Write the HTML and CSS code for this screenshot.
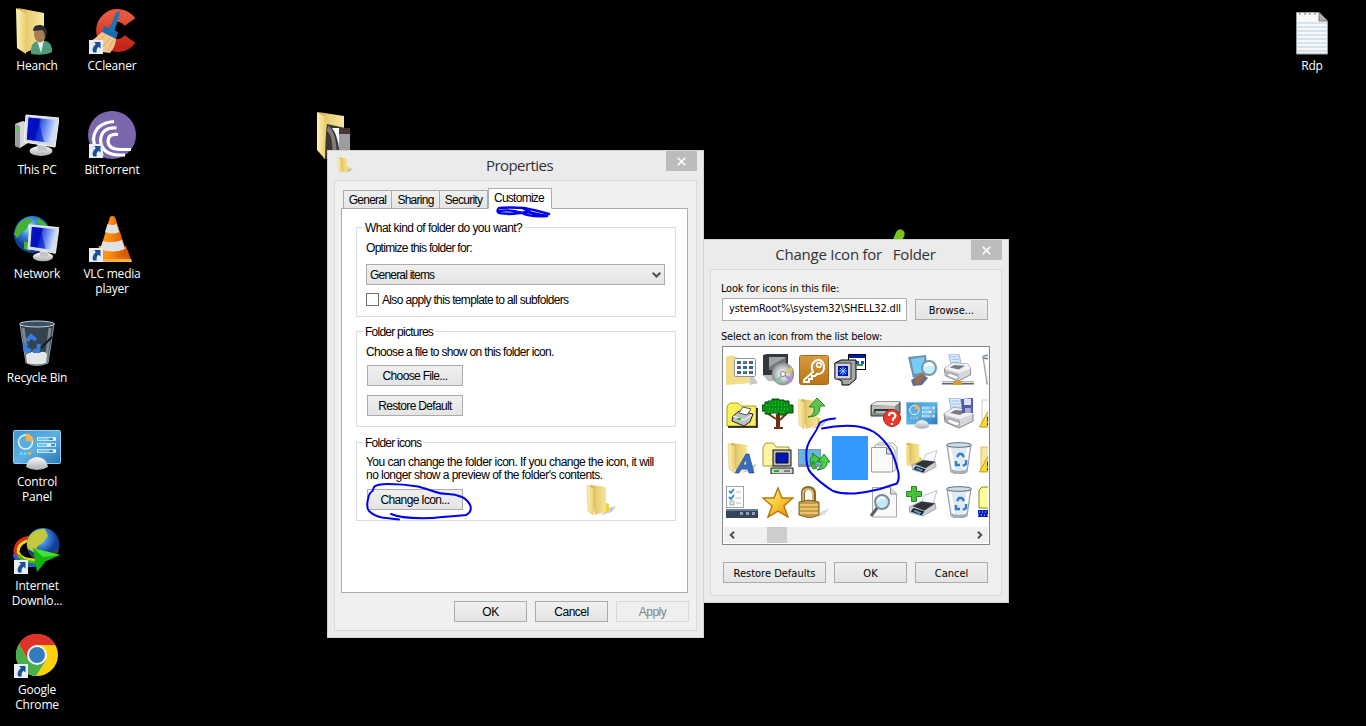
FILE: index.html
```html
<!DOCTYPE html>
<html lang="en">
	<head>
		<meta charset="UTF-8">
		<meta name="viewport" content="width=device-width,initial-scale=1">
		<title>Change folder icon</title>
		<link rel="stylesheet" href="styles.css">
	</head>
	<body>
		<!-- shared icons -->
		<svg class="sprite" width="0" height="0">
			<defs>
				<linearGradient id="g-folder" x1="0" x2="1"><stop offset="0" stop-color="#fff3b4"/><stop offset="1" stop-color="#eacb6c"/></linearGradient>
				<linearGradient id="g-back" x1="0" x2="1"><stop offset="0" stop-color="#c9a23e"/><stop offset=".35" stop-color="#e9cd72"/><stop offset="1" stop-color="#f9e9a0"/></linearGradient>
				<linearGradient id="g-screen" x1="0" x2="1" y2=".25"><stop offset="0" stop-color="#0a1fd0"/><stop offset=".42" stop-color="#0009b0"/><stop offset=".5" stop-color="#3358e8"/><stop offset="1" stop-color="#cfe0ff"/></linearGradient>
				<linearGradient id="g-metal" y1="0" x2="0" y2="1"><stop offset="0" stop-color="#fafafa"/><stop offset="1" stop-color="#a9adb1"/></linearGradient>
				<linearGradient id="g-panel" x2="1" y2="1"><stop offset="0" stop-color="#3f96d2"/><stop offset=".5" stop-color="#5eb0e2"/><stop offset="1" stop-color="#2c78b8"/></linearGradient>
				<linearGradient id="g-key" y1="0" x2="0" y2="1"><stop offset="0" stop-color="#d99b3c"/><stop offset="1" stop-color="#b8731a"/></linearGradient>
				<linearGradient id="g-gold" x1="0" x2="1" y2="1"><stop offset="0" stop-color="#fff3a0"/><stop offset=".5" stop-color="#fcc937"/><stop offset="1" stop-color="#d8860c"/></linearGradient>
				<linearGradient id="g-cone" x1="0" x2="1"><stop offset="0" stop-color="#ff9a20"/><stop offset=".4" stop-color="#ff8a10"/><stop offset="1" stop-color="#c95200"/></linearGradient>
				<linearGradient id="g-red" y1="0" x2="0" y2="1"><stop offset="0" stop-color="#e8583f"/><stop offset="1" stop-color="#c4261b"/></linearGradient>
				<radialGradient id="g-globe" cx=".4" cy=".3"><stop offset="0" stop-color="#b5e6ff"/><stop offset=".5" stop-color="#3b87dc"/><stop offset="1" stop-color="#123c96"/></radialGradient>
				<radialGradient id="g-disc"><stop offset="0" stop-color="#fff"/><stop offset=".6" stop-color="#c4c6ca"/><stop offset="1" stop-color="#8b8e92"/></radialGradient>
			</defs>
			<symbol id="arrow" viewBox="0 0 14 14">
				<rect width="14" height="14" fill="#e9eef4"/>
				<path d="M5 2H11.500V8.500L9.500 6.700C7.800 8.200 7.200 9.800 7.800 12.500H4.200C2.800 9.500 4 6.400 6.900 4Z" fill="#1d4f94"/>
			</symbol>
			<symbol id="folder" viewBox="0 0 32 32">
				<path d="M23 24L31 22 27 28 16 31Z" fill="#000" opacity=".2"/>
				<path d="M5 1L21 3V20L23 21V27L10 31Z" fill="url(#g-back)"/>
				<path d="M21 19l3 1v7l-3 1.500Z" fill="#ead13f"/>
				<path d="M2 1L8 4C9 5 9.500 8 9 22L8 31 3 27Z" fill="url(#g-folder)" stroke="#d9bc60" stroke-width=".5"/>
			</symbol>
			<symbol id="printer" viewBox="0 0 32 32">
				<path d="M7 0H18L21 12 10 15Z" fill="#dcebfa" stroke="#7391c4" stroke-width=".7"/>
				<path d="M9 3h8M10 6h8M10 9h9" stroke="#9fbde8"/>
				<path d="M2 16L11 10 28 11 31 16V23L17 30 3 24Z" fill="#d5d7dc" stroke="#63666d" stroke-width=".8"/>
				<path d="M2 16L11 10 28 11 31 16 18 21Z" fill="#f2f2f5"/>
				<path d="M3 18L18 22V29L3 24Z" fill="#b3b5bd"/>
				<path d="M7 21L18 25 15 28 5 24Z" fill="#fff" stroke="#777" stroke-width=".5"/>
				<path d="M8 15L13 12 25 13 18 17Z" fill="#777b84"/>
			</symbol>
			<symbol id="printer-dark" viewBox="0 0 32 32">
				<path d="M18 8L32 3 28 17 14 20Z" fill="#f8fbff" stroke="#9da4ac" stroke-width=".7"/>
				<path d="M1 21L14 15 30 17 31 23 16 31 2 27Z" fill="#c9ccd0" stroke="#757a80" stroke-width=".6"/>
				<path d="M5 20L15 15 30 17 18 25Z" fill="#303439"/>
				<path d="M3 26L6 22 18 26 15 30Z" fill="#17191c"/>
				<path d="M5 25l3-1 7 3-2 2Z" fill="#44a2d8"/>
			</symbol>
			<symbol id="bin" viewBox="0 0 32 32">
				<path d="M5 3L9 30Q17 34 25 30L29 3Z" fill="#dde5ed" fill-opacity=".85" stroke="#8c98a5"/>
				<path d="M8 6L12 29M26 6L22 30" stroke="#fff" stroke-width="2.500"/>
				<ellipse cx="17" cy="3" rx="12.500" ry="2.300" fill="#d3dde6" stroke="#5c6d7e"/>
				<path d="M9 27Q17 31 25 27L24 31Q17 33 10 31Z" fill="#a5afb8"/>
				<path d="M15 15l2-3h3l2 3M24 18l0 4-3 2M18 23h-4l0-4" fill="none" stroke="#2e7ed3" stroke-width="2.400"/>
			</symbol>
			<symbol id="panel" viewBox="0 0 48 48">
				<rect x=".5" y="6.500" width="47" height="33" rx="1" fill="url(#g-panel)" stroke="#8fd0f2"/>
				<circle cx="12.500" cy="18" r="7" fill="#5aaee2" stroke="#e3f5ff" stroke-width="1.500"/>
				<path d="M13 17V9.500A8 8 0 0 1 21 17Z" fill="#f8b050"/>
				<path d="M24 15h19M24 21h19M24 27h19" stroke="#e6f8ff" stroke-width="3.500"/>
				<path d="M25 15h11M25 21h9M25 27h11" stroke="#4fb5ec" stroke-width="1.500"/>
				<path d="M36 15h4M38 21h4M36 27h4" stroke="#1c66b4" stroke-width="1.500"/>
				<circle cx="8" cy="29.500" r="1.500" fill="#59e3ff"/><circle cx="12" cy="29.500" r="1.500" fill="#59e3ff"/><circle cx="16.500" cy="29.500" r="1.600" fill="#ffb444"/>
				<path d="M13 43Q14 34 24 33 34 34 35 43 30 46 24 46 18 46 13 43Z" fill="url(#g-metal)"/>
			</symbol>
			<symbol id="monitor" viewBox="0 0 36 44">
				<ellipse cx="18" cy="37" rx="11.500" ry="5" fill="url(#g-metal)"/>
				<path d="M14 28l9 1 1 8h-9Z" fill="#c3c6c9"/>
				<path d="M3 1L36 4 32 33 1 28Z" fill="#d9dcdf" stroke="#f6f6f6"/>
				<path d="M5.500 3.500L33 6 29.500 29.500 3.800 25.500Z" fill="url(#g-screen)"/>
				<path d="M15 4.500L21 28 4 25.500 5.500 3.500Z" fill="#0013c4" opacity=".6"/>
			</symbol>
			<symbol id="dialog-folder" viewBox="0 0 32 32">
				<path d="M1 28V8L4 5H12L15 8H30V28Z" fill="#f7f05c" stroke="#a8a800"/>
				<path d="M2 29H31V10" fill="none" stroke="#000" stroke-width="1.500"/>
			</symbol>
			<symbol id="warning" viewBox="0 0 32 32">
				<path d="M16 2L31 30H1Z" fill="#fbd82b" stroke="#b58b00" stroke-width="1.500"/>
				<path d="M15 11h4l-1 10h-2ZM15 23h4v4h-4Z" fill="#111"/>
			</symbol>
		</svg>

		<main class="desktop">
			<div class="shortcut">
				<svg class="shortcut__icon" viewBox="0 0 48 48">
					<path d="M5 0L31 5V36L12 45Z" fill="url(#g-back)"/>
					<path d="M3 0L12 5C14 7 14 10 13 34V46L4 40Z" fill="url(#g-folder)"/>
					<path d="M18 46Q17 34 25 33H33Q40 36 39 44 32 48 18 46Z" fill="#4f9c78"/>
					<path d="M24 32l4 13 3-13Z" fill="#e9f5f5"/>
					<ellipse cx="27" cy="26" rx="6" ry="8.500" fill="#a77c52"/>
					<path d="M20 23Q20 16 28 17 34 18 34 25L32 31Q32 23 29 22Z" fill="#292a2d"/>
				</svg>
				<span class="shortcut__name">Heanch</span>
			</div>
			<div class="shortcut">
				<svg class="shortcut__icon" viewBox="0 0 48 48">
					<path d="M2 12L10 9 15 11V31L7 36 2 34Z" fill="#d5d8da"/>
					<path d="M2 12L7 14V36L2 34Z" fill="#9a9ea1"/>
					<path d="M3 16l3 1v2l-3-1Z" fill="#3cea22"/>
					<use href="#monitor" x="10" y="2" width="36" height="44"/>
				</svg>
				<span class="shortcut__name">This PC</span>
			</div>
			<div class="shortcut">
				<svg class="shortcut__icon" viewBox="0 0 48 48">
					<circle cx="19.500" cy="18.500" r="18.500" fill="url(#g-globe)"/>
					<path d="M5 8L14 2 20 4 15 9 14 13 9 16 4 22 1 18ZM24 2Q32 5 35 11L29 10 24 7ZM11 25l7 3-1 7-6-2Z" fill="#45b233"/>
					<use href="#monitor" x="14" y="8" width="32" height="39"/>
				</svg>
				<span class="shortcut__name">Network</span>
			</div>
			<div class="shortcut">
				<svg class="shortcut__icon" viewBox="0 0 48 48">
					<path d="M7 4L13 43Q24 48 35 43L41 4Z" fill="#35434f" stroke="#8a98a4"/>
					<path d="M10 8L15 42M37 8L33 43" stroke="#909da9" stroke-width="3" opacity=".75"/>
					<path d="M13 35Q20 29 26 33 31 30 34 34L33 43Q24 46 14 43Z" fill="#e4e6e7"/>
					<path d="M14 21l4-5 5 4M13 23l-1 6 6 2M20 31h5l1-7" fill="none" stroke="#347ce0" stroke-width="4"/>
					<path d="M39 17L28 28" stroke="#121b23" stroke-width="2"/>
					<ellipse cx="24" cy="4" rx="17.500" ry="3" fill="#385166" stroke="#cbd3d9"/>
				</svg>
				<span class="shortcut__name">Recycle Bin</span>
			</div>
			<div class="shortcut">
				<svg class="shortcut__icon" viewBox="0 0 48 48"><use href="#panel"/></svg>
				<span class="shortcut__name">Control Panel</span>
			</div>
			<div class="shortcut">
				<svg class="shortcut__icon" viewBox="0 0 48 48">
					<g fill="none" stroke-width="3">
						<path d="M18 9Q2 11 2 24 4 34 16 36" stroke="#e02a18"/>
						<path d="M18 12Q5 14 5 24 8 32 22 32" stroke="#f7d11a"/>
						<path d="M5 27Q12 36 24 34" stroke="#30bc22"/>
						<path d="M1 26Q5 40 25 37" stroke="#2f59df"/>
					</g>
					<circle cx="30" cy="16.500" r="16.500" fill="url(#g-globe)"/>
					<path d="M17 7Q23 0 32 1L35 8 30 14 24 19 22 25 15 21Q12 14 17 7Z" fill="#c3c83d"/>
					<path d="M16 25Q28 30 46 21 43 33 30 33 21 32 16 25Z" fill="#3b4a31"/>
					<path d="M20 20L47 27 33 33 24 44Z" fill="#12b513"/>
					<path d="M20 20L47 27 30 29Z" fill="#47e238"/>
					<use href="#arrow" x="1" y="32" width="14" height="14"/>
				</svg>
				<span class="shortcut__name">Internet Downlo...</span>
			</div>
			<div class="shortcut">
				<svg class="shortcut__icon" viewBox="0 0 48 48">
					<circle cx="24" cy="23" r="21" fill="#ffd00c"/>
					<path d="M6 12A21 21 0 0 1 42.500 13H24L15 28Z" fill="#df3229"/>
					<path d="M6 12A21 21 0 0 0 23 44L33 28H15Z" fill="#4aae4b"/>
					<circle cx="24" cy="23" r="10" fill="#f4f6f7"/>
					<circle cx="24" cy="23" r="8" fill="#327cbd"/>
					<use href="#arrow" x="1" y="32" width="14" height="14"/>
				</svg>
				<span class="shortcut__name">Google Chrome</span>
			</div>
			<div class="shortcut">
				<svg class="shortcut__icon" viewBox="0 0 48 48">
					<path d="M42 14A15 15 0 1 0 42 31" fill="none" stroke="url(#g-red)" stroke-width="13"/>
					<path d="M15 23Q7 31 1 34L6 43 22 45Q28 38 28 30Z" fill="#f2c68c"/>
					<path d="M6 37l11-10M13 41l9-11M20 43l5-11" stroke="#dca76a" stroke-width="1"/>
					<path d="M16 18L30 24 28 31 14 24Z" fill="#1d69ad"/>
					<path d="M28 5Q30 2 32 5L26 25 21 22Z" fill="#1c73b8"/>
					<use href="#arrow" x="1" y="32" width="14" height="14"/>
				</svg>
				<span class="shortcut__name">CCleaner</span>
			</div>
			<div class="shortcut">
				<svg class="shortcut__icon" viewBox="0 0 48 48">
					<circle cx="24" cy="23" r="24" fill="#7b67ad"/>
					<g fill="none" stroke="#fff" stroke-width="3.200">
						<path d="M30 22.500Q20 21 20 30 21 37.500 32 37.500H43"/>
						<path d="M28.500 16Q13 15 12.500 29 14 42 30 43H37"/>
						<path d="M26 9.500Q7 11 5.500 27 6 38 15 44"/>
					</g>
					<use href="#arrow" x="1" y="32" width="14" height="14"/>
				</svg>
				<span class="shortcut__name">BitTorrent</span>
			</div>
			<div class="shortcut">
				<svg class="shortcut__icon" viewBox="0 0 48 48">
					<path d="M11 30H38L44 46H6Z" fill="url(#g-cone)"/>
					<path d="M22 1Q24-1 27 1L39 37Q33 43 24 42 16 42 11 38Z" fill="url(#g-cone)"/>
					<path d="M6 43H43L44 46H6Z" fill="#ffb13b"/>
					<path d="M19.500 8Q24 10 28.500 8L31 16Q25 19 17 16ZM15 25Q24 28 34 24L37 33Q25 38 12 33Z" fill="#dfe2e4"/>
					<use href="#arrow" x="1" y="32" width="14" height="14"/>
				</svg>
				<span class="shortcut__name">VLC media player</span>
			</div>
			<div class="shortcut shortcut--folder">
				<svg class="shortcut__icon" viewBox="0 0 48 48">
					<path d="M5 0L31 4V40L12 47Z" fill="url(#g-back)"/>
					<path d="M14 12L37 17V47H10Z" fill="#3a3836"/>
					<path d="M15 14Q23 18 24 44L19 46Q21 25 14 19Z" fill="#827e74"/>
					<path d="M19 16h7v20Q24 22 19 16Z" fill="#fff"/>
					<path d="M26 17L37 18V47H26Z" fill="#9c9ca2"/>
					<path d="M26 16h11v6H26Z" fill="#4b3531"/>
					<path d="M4 0L12 5 13 12 12 47 4 38Z" fill="url(#g-folder)"/>
				</svg>
			</div>
			<div class="shortcut shortcut--rdp">
				<svg class="shortcut__icon" viewBox="0 0 48 48">
					<path d="M8.500 4.500H31L39.500 13V46H8.500Z" fill="#f6f8fa" stroke="#9c9fa2"/>
					<path d="M9 15h30M9 19h30M9 23h30M9 27h30M9 31h30M9 35h30M9 39h30M9 43h30" stroke="#b6cfe0"/>
					<path d="M31 4L40 13H31Z" fill="#aeb2b6" stroke="#4e5154" stroke-width=".7"/>
					<path d="M12 5v3M17 5v3M22 5v3M27 5v3" stroke="#6c6c6c" stroke-dasharray="2 1"/>
				</svg>
				<span class="shortcut__name">Rdp</span>
			</div>
		</main>

		<div class="leaf"></div>

		<section class="window window--properties">
			<header class="titlebar">
				<svg class="titlebar__icon" viewBox="0 0 32 32"><use href="#folder"/></svg>
				<h1 class="titlebar__text">Properties</h1>
				<span class="close"><svg width="9" height="9" viewBox="0 0 9 9"><path d="M.7.7l7.600 7.600M8.300.7L.7 8.300" stroke="#fff" stroke-width="1.600"/></svg></span>
			</header>
			<div class="client">
				<nav class="tabs">
					<span class="tab">General</span>
					<span class="tab">Sharing</span>
					<span class="tab">Security</span>
					<span class="tab tab--active">Customize</span>
				</nav>
				<div class="panel">
					<fieldset class="group group--kind">
						<legend>What kind of folder do you want?</legend>
						<p class="line line--optimize">Optimize this folder for:</p>
						<div class="select"><span>General items</span><svg width="9" height="6" viewBox="0 0 9 6"><path d="M.7.7L4.500 4.500 8.300.7" fill="none" stroke="#505050" stroke-width="2"/></svg></div>
						<div class="check"><span class="check__box"></span><span>Also apply this template to all subfolders</span></div>
					</fieldset>
					<fieldset class="group group--pictures">
						<legend class="tight">Folder pictures</legend>
						<p class="line">Choose a file to show on this folder icon.</p>
						<span class="button button--wide">Choose File...</span>
						<span class="button button--wide">Restore Default</span>
					</fieldset>
					<fieldset class="group group--icons">
						<legend class="tight">Folder icons</legend>
						<p class="note">You can change the folder icon. If you change the icon, it will<br>no longer show a preview of the folder's contents.</p>
						<div class="preview">
							<span class="button button--wide">Change Icon...</span>
							<svg class="preview__icon" viewBox="0 0 32 32"><use href="#folder"/></svg>
						</div>
					</fieldset>
				</div>
				<footer class="buttons">
					<span class="button">OK</span>
					<span class="button">Cancel</span>
					<span class="button button--disabled">Apply</span>
				</footer>
			</div>
		</section>

		<section class="window window--change">
			<header class="titlebar">
				<h1 class="titlebar__text">Change Icon for   Folder</h1>
				<span class="close"><svg width="9" height="9" viewBox="0 0 9 9"><path d="M.7.7l7.600 7.600M8.300.7L.7 8.300" stroke="#fff" stroke-width="1.600"/></svg></span>
			</header>
			<div class="client">
				<p class="label">Look for icons in this file:</p>
				<div class="file">
					<span class="input">ystemRoot%\system32\SHELL32.dll</span>
					<span class="button">Browse...</span>
				</div>
				<p class="label label--list">Select an icon from the list below:</p>
				<div class="list">
					<div class="icons">
						<!-- row 1 -->
						<svg class="icon" viewBox="0 0 32 32">
							<path d="M0 3Q6 0 9 2l3 2h14v25L0 31Z" fill="#f3dc8b"/><path d="M24 18l8 11-8 2Z" fill="#c4c9ce"/>
							<rect x="8.500" y="4.500" width="21" height="18" rx="1" fill="#fbfcff" stroke="#8e939a"/>
							<path d="M11 8.500h4M17 8.500h4M23 8.500h4M11 13.500h4M17 13.500h4M23 13.500h4M11 18.500h4M17 18.500h4M23 18.500h4" stroke="#3a668f" stroke-width="3"/>
							<path d="M23 8h3M11 13h3M23 18h3" stroke="#af4836" stroke-width="2"/>
							<path d="M17 8h3M17 18h3" stroke="#3f9c62" stroke-width="2"/>
						</svg>
						<svg class="icon" viewBox="0 0 32 32">
							<path d="M1 1L5 0H26V21H1Z" fill="#35383b"/><path d="M1 21h25l5 7-25-1Z" fill="#babdc0"/><path d="M7 3h17v13H7Z" fill="#73777b"/><path d="M7 3h17L7 13Z" fill="#a1a4a7"/>
							<circle cx="21" cy="20" r="11" fill="url(#g-disc)" stroke="#8c8e90" stroke-width=".7"/>
							<path d="M21 20L29 13 31 17Z" fill="#e4c75b"/><path d="M21 20L13 27 17 30Z" fill="#8bc0a9"/><path d="M21 20L28 28 31 24Z" fill="#b58dd0"/><circle cx="21" cy="20" r="2.500" fill="#fff" stroke="#777"/>
						</svg>
						<svg class="icon" viewBox="0 0 32 32">
							<rect x="1.500" y="1.500" width="29" height="29" rx="2" fill="url(#g-key)" stroke="#a66b1c"/>
							<path d="M15 18L6 26v2h5v-3h3v-3h3l2-2Q27 20 26 11 24 4 17 7 12 11 15 18Z" fill="none" stroke="#fff" stroke-width="2"/><circle cx="21" cy="11" r="2.300" fill="none" stroke="#fff" stroke-width="1.600"/>
						</svg>
						<svg class="icon" viewBox="0 0 32 32">
							<rect x="14.500" y=".5" width="17" height="15" fill="#fff" stroke="#000"/><path d="M15 1h16v3H15Z" fill="#001bac"/><path d="M22 7h3v3h-3ZM27 7h3v3h-3Z" fill="#1e51e4"/><path d="M23 11h6" stroke="#219d32" stroke-width="2"/>
							<path d="M1 9L7 6H22V25L15 31H8V27L1 24Z" fill="#a7a7a7" stroke="#000"/><path d="M1 9H17V25H1Z" fill="#d2d2d2" stroke="#333"/><path d="M4 12h10v10H4Z" fill="#001bbd"/><path d="M9 13v8M5 17h8M6 14l6 6M12 14l-6 6" stroke="#8ad8ff"/>
						</svg>
						<span class="icon"></span>
						<svg class="icon" viewBox="0 0 32 32">
							<path d="M2 3L20 1 22 21 7 24Z" fill="#728fae"/><path d="M5 5L18 3 19 18 8 20Z" fill="#76cef5"/><path d="M5 26l11-6 6 4-6 7-9 1Z" fill="#646c8a"/><path d="M17 20l-7 9" stroke="#ad6b3a" stroke-width="4"/>
							<circle cx="23" cy="14" r="7" fill="#c5eeff" stroke="#7695a8" stroke-width="2"/><path d="M19 12q4-5 8 0" fill="none" stroke="#fff" stroke-width="3"/>
						</svg>
						<svg class="icon" viewBox="0 0 32 32"><use href="#printer" width="30" height="29"/><path d="M0 29h32" stroke="#5e6265" stroke-width="3"/><path d="M0 28.500h32" stroke="#e0e2e3"/><path d="M11 27h9v4h-9Z" fill="#d79b22"/></svg>
						<svg class="icon" viewBox="0 0 32 32"><use href="#bin"/></svg>
						<!-- row 2 -->
						<svg class="icon" viewBox="0 0 32 32"><use href="#dialog-folder"/><path d="M7 18l6-5 14 3-3 8-6 4-12-5Z" fill="#c1c1c1" stroke="#222"/><path d="M13 15l4-6 8 2-4 6Z" fill="#fff" stroke="#555"/><path d="M7 18l11 4 8-5" fill="none" stroke="#fff"/><path d="M11 21h4" stroke="#19c632" stroke-width="2"/></svg>
						<svg class="icon" viewBox="0 0 32 32"><path d="M14 16h4v13h3v2h-9v-2h2Z" fill="#6d3111"/><path d="M14 21L5 15M18 22l8-8M16 20v-9" stroke="#6d3111" stroke-width="2"/><path d="M6 3h4V1h7v1h5v1h5v4h4v8h-7v2h-7v-2H9v1H3v-3H0V7h3V4h3Z" fill="#078e14" stroke="#034b09"/><path d="M4 7h23M7 11h21M7 4h15M3 14h20" stroke="#37e343" stroke-dasharray="1 2"/></svg>
						<svg class="icon" viewBox="0 0 32 32"><use href="#folder" x="-2"/><path d="M10 19Q17 18 16 9H11L19 0 27 8H22Q23 19 10 19Z" fill="#5fc34f" stroke="#278c27"/></svg>
						<span class="icon"></span>
						<svg class="icon" viewBox="0 0 32 32"><path d="M1 7L6 4H30V15L25 18H1Z" fill="#8a8d8e" stroke="#333"/><path d="M1 7L6 4H30L25 8Z" fill="#e8e8e5"/><path d="M2 8h23v7H2Z" fill="#b9bbb9"/><path d="M4 12h20" stroke="#353535" stroke-width="2"/><path d="M3 14h3" stroke="#15a52a" stroke-width="2"/><circle cx="22" cy="20" r="8.500" fill="#ed3829" stroke="#b82117"/><path d="M19 18q0-4 4-3 5 2 0 6v2M22 25v2" fill="none" stroke="#fff" stroke-width="2.200"/></svg>
						<svg class="icon" viewBox="0 0 48 48"><use href="#panel"/></svg>
						<svg class="icon" viewBox="0 0 32 32"><use href="#printer"/><path d="M19 1l12-1v15H20Z" fill="#535ca5"/><path d="M22 1h7v6h-7Z" fill="#dce1ff"/><path d="M23 10h6v5h-6Z" fill="#a5add7"/></svg>
						<svg class="icon" viewBox="0 0 32 32"><path d="M4 2h25v27H4Z" fill="#fff" stroke="#ccc"/><use href="#warning" x="0" y="13" width="19" height="17"/></svg>
						<!-- row 3 -->
						<svg class="icon" viewBox="0 0 32 32"><use href="#folder"/><path d="M9 31L20 12h3l5 19h-5l-1-4h-7l-2 4ZM17 23h4l-1-6Z" fill="#346dcb" stroke="#173d87" stroke-width=".6"/></svg>
						<svg class="icon" viewBox="0 0 32 32"><path d="M1 24V5L4 1H11L14 5H27V24Z" fill="#fff5a2" stroke="#9c9b2e"/><path d="M3 8h22M3 13h22M3 18h22" stroke="#f3dd89" stroke-dasharray="1 2"/><rect x="11" y="8" width="18" height="16" fill="#bcbcbc" stroke="#111"/><path d="M14 11h12v10H14Z" fill="#0013bd" stroke="#111"/><path d="M9 26h22v6H9Z" fill="#d0d0d0" stroke="#111"/><path d="M12 29h5" stroke="#1dad24" stroke-width="2"/><path d="M22 29h6" stroke="#333"/></svg>
						<svg class="icon" viewBox="0 0 32 32"><path d="M0 7h23v18H0Z" fill="#7f95a5"/><path d="M1 8h21v14H1Z" fill="#65b7df"/><path d="M15 27Q9 17 15 14l-1-3 8 6-6 5-1-3q-3 2 4 7Z" fill="#48c844" stroke="#168728"/><path d="M19 28Q25 24 24 20h-4l6-8 6 8h-3q1 7-10 8Z" fill="#4dd24a" stroke="#168728"/></svg>
						<span class="icon icon--selected"></span>
						<svg class="icon" viewBox="0 0 32 32"><path d="M8 1h15l4 4v21H8Z" fill="#f7f8f9" stroke="#aaa"/><path d="M5 3h15l5 5v21H5Z" fill="#fff" stroke="#aaa"/><path d="M1.500 5.500h15l6 6V30H1.500Z" fill="#f8f9fb" stroke="#999"/><path d="M16.500 6v6h6" fill="#d9dcdf" stroke="#777"/></svg>
						<svg class="icon" viewBox="0 0 32 32"><use href="#folder" x="-3" y="0" width="25" height="25"/><use href="#printer-dark" x="4" y="6" width="28" height="26"/></svg>
						<svg class="icon" viewBox="0 0 32 32"><use href="#bin"/></svg>
						<svg class="icon" viewBox="0 0 32 32"><path d="M3 5h26v24H3Z" fill="#f9e6a0" stroke="#d6bd6d"/><use href="#warning" x="0" y="14" width="19" height="17"/></svg>
						<!-- row 4 -->
						<svg class="icon" viewBox="0 0 32 32"><rect x=".5" y=".5" width="17" height="21" fill="#fff" stroke="#9ea2a7"/><path d="M3 5l2 2 3-4M3 11l2 2 3-4" fill="none" stroke="#238ccc" stroke-width="1.800"/><path d="M10 6h5M10 12h5M10 17h5" stroke="#b5b9bc"/><path d="M4 15h4v4H4Z" fill="#e9ecef" stroke="#aaa"/><path d="M0 23h32v9H0Z" fill="#33465c"/><path d="M0 23h32v2H0Z" fill="#667e98"/><path d="M14 26h3v3h-3ZM20 26h3v3h-3ZM26 26h3v3h-3Z" fill="#91a0b2"/></svg>
						<svg class="icon" viewBox="0 0 32 32"><path d="M16 2L20 12 31 12 22 20 26 31 16 25 6 31 10 20 1 12 12 12Z" fill="url(#g-gold)" stroke="#bb790e" stroke-width="1.500"/></svg>
						<svg class="icon" viewBox="0 0 32 32"><path d="M20 27l12-5-6 7-12 3Z" fill="#bbb" opacity=".5"/><path d="M5 17V8Q5 2 10 2 16 2 16 8V17" fill="none" stroke="#8a692a" stroke-width="4"/><path d="M5 17V8Q5 3 10 3 15 3 15 8V17" fill="none" stroke="#dfc889" stroke-width="1.500"/><path d="M1 16l10-2 10 2v13l-9 3L1 29Z" fill="#c89b3e" stroke="#806027"/><path d="M2 19h18M2 23h18M2 27h18" stroke="#ead18b" stroke-width="1.500"/></svg>
						<span class="icon"></span>
						<svg class="icon" viewBox="0 0 32 32"><path d="M2.500 1.500h18l6 6V31h-24Z" fill="#f8f9fa" stroke="#a6a8aa"/><path d="M20.500 1v7h6" fill="#ddd" stroke="#888"/><circle cx="12" cy="16" r="7" fill="#bfe8fb" stroke="#7d8994" stroke-width="2"/><path d="M7 22L1 30" stroke="#57606b" stroke-width="3"/><path d="M8 15q2-6 7-2" fill="none" stroke="#fff" stroke-width="2"/></svg>
						<svg class="icon" viewBox="0 0 32 32"><use href="#printer-dark" x="1" y="2" width="31" height="29"/><path d="M5.500.5h5v5h5v5h-5v5h-5v-5h-5v-5h5Z" fill="#47c33b" stroke="#23852a"/></svg>
						<svg class="icon" viewBox="0 0 32 32"><use href="#bin"/></svg>
						<svg class="icon" viewBox="0 0 32 32"><path d="M1 21V4L4 1H14V22H1Z" fill="#ffff9d" stroke="#8c8c00"/><path d="M0 24h32v7H0Z" fill="#001bc0"/><path d="M1 26h32M0 29h32" stroke="#fff" stroke-dasharray="1 2"/></svg>
					</div>
					<div class="scroll">
						<svg width="6" height="8" viewBox="0 0 6 8"><path d="M5 .7L1.700 4 5 7.300" fill="none" stroke="#505050" stroke-width="2"/></svg>
						<span class="scroll__thumb"></span>
						<svg width="6" height="8" viewBox="0 0 6 8"><path d="M1 .7L4.300 4 1 7.300" fill="none" stroke="#505050" stroke-width="2"/></svg>
					</div>
				</div>
				<footer class="buttons">
					<span class="button button--restore">Restore Defaults</span>
					<span class="button">OK</span>
					<span class="button">Cancel</span>
				</footer>
			</div>
		</section>

		<!-- pen marks -->
		<svg class="marks" viewBox="0 0 1366 726">
			<path stroke-width="2.400" d="M549 214Q535 210 524 208 509 207 499 208 496 211 499 213 512 215 527 212L547 216Q529 217 522 213 510 209 500 211M522 208L534 214M508 214Q521 214 529 211"/>
			<path d="M391 514Q400 518 422 518.300 433 518.300 442 517 457 516 466 515 472 512 470.500 506 468 500 462 497 455 494 448 494 440 494 434 491.500 427 489 418 486.500 403 484 388 484 377 484 374 487 373 490 372.500 491 369 493 368 499 366 507 369 511 374 516 382 517.500 390 518.500 399 519.500"/>
			<path d="M835 418.500Q826 419 820 422.500 817 430 812 437 806 446 806.300 454 806 468 811 473 820 483 833 491 841 494 855 493.500 868 492 880 489 889 486 897 483.500 900 478 898 471 895 458 890 449 883 438 874 432 865 427 854 426 838 425 822 428.500"/>
		</svg>
	</body>
</html>
```
FILE: styles.css
```css
*
{
	box-sizing: border-box;
}

body
{
	margin: 0;
	width: 1366px;
	height: 726px;
	overflow: hidden;
	background-color: #000;
	font-family: 'Liberation Sans', sans-serif;
	font-size: 12px;
	color: #000;
}

h1,
p
{
	margin: 0;
	font-weight: normal;
}

svg
{
	flex: none;
}

.sprite
{
	position: absolute;
}

/* desktop */
.desktop
{
	display: grid;
	grid-template-rows: repeat(7, 104px);
	grid-auto-columns: 75px;
	grid-auto-flow: column;
}

.shortcut
{
	display: flex;
	flex-direction: column;
	align-items: center;
	width: 74px;
	padding: 8px 4px 0;
}

.shortcut--folder
{
	grid-area: 2 / 5;
}

.shortcut--rdp
{
	grid-area: 1 / 18;
}

.shortcut__icon
{
	width: 48px;
	height: 48px;
	overflow: visible;
}

.shortcut__name
{
	margin-top: 2px;
	font-family: 'Open Sans', sans-serif;
	font-size: 12px;
	line-height: 15px;
	letter-spacing: -0.2px;
	text-align: center;
	color: #fff;
}

.leaf
{
	position: absolute;
	left: 894px;
	top: 229px;
	width: 9px;
	height: 18px;
	border-radius: 5px;
	background-color: #78c518;
	transform: rotate(22deg);
}

/* windows */
.window
{
	position: absolute;
	display: flex;
	flex-direction: column;
	padding: 0 6px 6px;
	border: 1px solid #d2d2d2;
	background-color: #ebebeb;
}

.window--properties
{
	left: 327px;
	top: 150px;
	width: 377px;
	height: 488px;
	font-size: 12px;
	letter-spacing: -0.66px;
}

.window--change
{
	left: 703px;
	top: 239px;
	width: 306px;
	height: 364px;
	font-family: 'DejaVu Sans Condensed', 'DejaVu Sans', sans-serif;
	font-stretch: condensed;
	font-size: 11px;
}

.titlebar
{
	display: flex;
	height: 29px;
}

.titlebar__icon
{
	width: 16px;
	height: 16px;
	margin: 6px 0 0 3px;
}

.titlebar__text
{
	flex: 1;
	padding-left: 20px;
	font-family: 'Open Sans', sans-serif;
	font-size: 15px;
	font-stretch: normal;
	line-height: 29px;
	letter-spacing: -0.55px;
	text-align: center;
	white-space: pre;
	color: #333;
}

.window--change .titlebar__text
{
	padding-left: 30px;
	letter-spacing: -0.25px;
}

.close
{
	display: flex;
	align-items: center;
	justify-content: center;
	width: 31px;
	height: 20px;
	background-color: #bcbcbc;
}

.client
{
	flex: 1;
	border: 1px solid #dadada;
	background-color: #f0f0f0;
}

.button
{
	display: flex;
	align-items: center;
	justify-content: center;
	width: 73px;
	height: 21px;
	border: 1px solid #acacac;
	background: linear-gradient(#f0f0f0, #e4e4e4);
	white-space: nowrap;
}

.button--wide
{
	width: 96px;
	margin-left: 1px;
}

.button--disabled
{
	border-color: #d9d9d9;
	background: #efefef;
	color: #838383;
}

.buttons
{
	display: flex;
	justify-content: flex-end;
	gap: 8px;
}

/* properties */
.window--properties .client
{
	padding: 7px 7px 0 6px;
}

.tabs
{
	display: flex;
	align-items: flex-end;
	height: 21px;
	margin-bottom: -1px;
	padding-left: 2px;
	letter-spacing: -0.75px;
}

.tab
{
	width: 49px;
	height: 19px;
	border: 1px solid #acacac;
	background: linear-gradient(#f0f0f0, #e5e5e5);
	line-height: 19px;
	text-align: center;
}

.tab + .tab
{
	border-left: 0;
	width: 48px;
}

.tab + .tab--active
{
	position: relative;
	width: 64px;
	height: 21px;
	padding-right: 2px;
	border-left: 1px solid #acacac;
	border-bottom-color: #fff;
	background: #fff;
}

.panel
{
	width: 347px;
	height: 385px;
	padding: 12px 11px 0 14px;
	border: 1px solid #acacac;
	background-color: #fff;
}

.group
{
	min-width: 0;
	margin: 0;
	padding: 0 10px 0 9px;
	border: 1px solid #dcdcdc;
}

.group legend
{
	height: 13px;
	margin-left: -3px;
	padding: 0 2px;
	line-height: 15px;
	letter-spacing: -0.55px;
}

.group .tight
{
	letter-spacing: -0.75px;
}

.group--kind
{
	height: 96px;
	margin-bottom: 8px;
}

.group--pictures
{
	height: 102px;
	margin-bottom: 9px;
}

.group--icons
{
	height: 85px;
}

.line
{
	padding-top: 7px;
	line-height: 14px;
}

.line--optimize
{
	letter-spacing: -0.7px;
}

.select
{
	display: flex;
	align-items: center;
	justify-content: space-between;
	height: 21px;
	margin-top: 9px;
	padding: 0 3px;
	border: 1px solid #acacac;
	background: linear-gradient(#f0f0f0, #e4e4e4);
	letter-spacing: -0.8px;
}

.check
{
	display: flex;
	gap: 3px;
	margin-top: 8px;
	line-height: 14px;
}

.check__box
{
	width: 13px;
	height: 13px;
	border: 1px solid #707070;
}

.group--pictures .button
{
	margin-top: 6px;
}

.group--pictures .button + .button
{
	margin-top: 9px;
}

.note
{
	padding-top: 7px;
	line-height: 13px;
	letter-spacing: -0.53px;
	white-space: nowrap;
}

.preview
{
	display: flex;
	margin-top: 2px;
}

.preview .button
{
	margin-top: 5px;
}

.preview__icon
{
	width: 32px;
	height: 32px;
	margin-left: 122px;
}

.window--properties .buttons
{
	margin-top: 8px;
	letter-spacing: -0.5px;
}

/* change icon */
.window--change .client
{
	padding: 10px 12px 0 11px;
}

.window--change .button
{
	padding-top: 1px;
}

.label
{
	line-height: 18px;
	margin-left: -1px;
	letter-spacing: -0.2px;
}

.file
{
	display: flex;
	align-items: center;
	justify-content: space-between;
	padding-right: 1px;
}

.input
{
	display: flex;
	justify-content: flex-end;
	width: 185px;
	height: 23px;
	padding: 3px 5px 0 0;
	border: 1px solid #abadb3;
	background-color: #fff;
	line-height: 14px;
	letter-spacing: -0.13px;
	white-space: nowrap;
}

.label--list
{
	padding-top: 7px;
}

.list
{
	width: 268px;
	height: 199px;
	padding: 1px;
	border: 1px solid #828790;
	background-color: #fff;
}

.icons
{
	display: grid;
	grid-template-columns: repeat(8, 36px);
	grid-auto-rows: 44px;
	align-items: center;
	justify-items: center;
	height: 179px;
	overflow: hidden;
}

.icon
{
	width: 32px;
	height: 32px;
}

.icon--selected
{
	width: 36px;
	height: 44px;
	background-color: #39f;
}

.scroll
{
	display: flex;
	align-items: center;
	height: 16px;
	padding: 0 5px;
	background-color: #f0f0f0;
}

.scroll__thumb
{
	width: 20px;
	height: 16px;
	margin: 0 auto 0 32px;
	background-color: #cdcdcd;
}

.window--change .buttons
{
	margin-top: 17px;
	padding-right: 1px;
}

.window--change .button--restore
{
	width: 103px;
}

/* pen */
.marks
{
	position: absolute;
	left: 0;
	top: 0;
	width: 1366px;
	height: 726px;
	fill: none;
	stroke: #0000f0;
	stroke-width: 2;
	stroke-linecap: round;
	stroke-linejoin: round;
}
```
